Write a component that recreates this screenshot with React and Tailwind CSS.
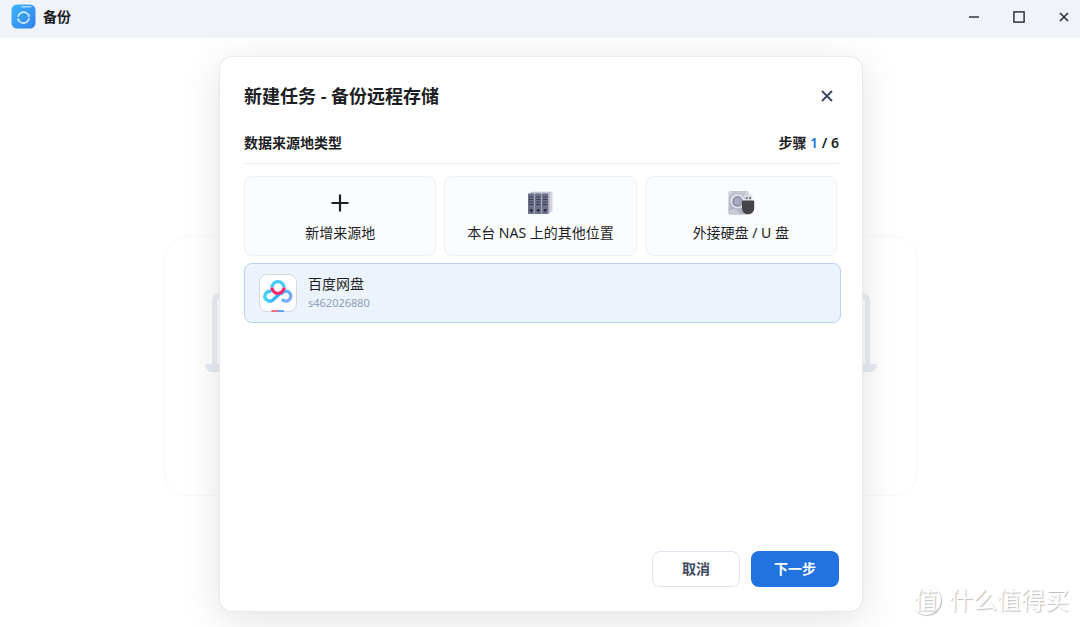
import React, { useState } from "react";

const SOURCE_TYPES = [
  { id: "new", label: "新增来源地", Icon: PlusIcon },
  { id: "nas", label: "本台 NAS 上的其他位置", Icon: ServerIcon },
  { id: "usb", label: "外接硬盘 / U 盘", Icon: DiskIcon },
];

const ACCOUNTS = [{ id: "baidu", name: "百度网盘", user: "s462026880" }];

function AppLogo() {
  return (
    <svg width="25" height="25" viewBox="0 0 25 25" aria-hidden="true">
      <defs>
        <linearGradient id="logoBg" x1="0" y1="0" x2="1" y2="1">
          <stop offset="0" stopColor="#3cb5fb" />
          <stop offset="1" stopColor="#3180ec" />
        </linearGradient>
      </defs>
      <rect x="0.5" y="0.5" width="24" height="24" rx="5.5" fill="url(#logoBg)" />
      <rect x="10" y="2" width="10.5" height="1.6" rx="0.8" fill="#a6d8fc" />
      <g fill="none" stroke="#d5ecfd" strokeWidth="1.6" strokeLinecap="round">
        <path d="M7.3 12.2A5.6 5.6 0 0 1 17.2 10.4" />
        <path d="M17.9 14.6A5.6 5.6 0 0 1 8 17" />
      </g>
      <path d="M16 12.6l3.2.2-.9-3.1zM9 15.2l-3.1-.6.8 3.2z" fill="#d5ecfd" />
    </svg>
  );
}

function PlusIcon() {
  return (
    <svg width="28" height="28" viewBox="0 0 28 28" aria-hidden="true">
      <path d="M14 5.5v17M5.5 14h17" stroke="#1c1e24" strokeWidth="2.2" fill="none" />
    </svg>
  );
}

function ServerIcon() {
  return (
    <svg width="28" height="28" viewBox="0 0 28 28" aria-hidden="true">
      <path d="M2 5.2L5.5 2.8H26.5L23 5.2z" fill="#c3c4d1" />
      <path d="M22.5 5.2L26.5 2.8V22L22.5 25z" fill="#d2d3de" />
      {[2, 9, 16].map((x) => (
        <g key={x}>
          <path d={`M${x + 6} 5.2l2-1.6v20l-2 1.4z`} fill="#c0c1ce" />
          <rect x={x} y="4.5" width="6.3" height="20.5" rx="0.5" fill="#6d7089" />
          <path
            d={`M${x + 1} 8h4.3M${x + 1} 10.5h4.3M${x + 1} 13h4.3M${x + 1} 15.5h4.3`}
            stroke="#3c3f55"
            strokeWidth="1.1"
          />
          <circle cx={x + 3.2} cy="21.3" r="1.4" fill="#24273a" />
        </g>
      ))}
    </svg>
  );
}

function DiskIcon() {
  return (
    <svg width="28" height="28" viewBox="0 0 28 28" aria-hidden="true">
      <defs>
        <linearGradient id="diskBody" x1="0" y1="0" x2="0" y2="1">
          <stop offset="0" stopColor="#c5c7d2" />
          <stop offset="1" stopColor="#adb0be" />
        </linearGradient>
      </defs>
      <rect x="1.5" y="2" width="20" height="23.5" rx="2" fill="url(#diskBody)" />
      <path d="M3.5 20.5c4-1 8 1 10 5h-10z" fill="#c9cbd5" />
      <circle cx="10.6" cy="12.4" r="7" fill="#e6e7ed" />
      <circle cx="10.6" cy="12.4" r="4.6" fill="#a7aabc" stroke="#85889b" strokeWidth="1.4" />
      <g fill="#f3f4f7">
        <circle cx="3.6" cy="4.1" r="0.8" />
        <circle cx="19.4" cy="4.1" r="0.8" />
        <circle cx="3.6" cy="23" r="0.8" />
      </g>
      <rect x="17.3" y="5.8" width="8" height="7" rx="0.8" fill="#dcdee6" />
      <path d="M18.9 8h1.7v2h-1.7zM22.1 8h1.7v2h-1.7z" fill="#666a7c" />
      <path d="M15 12.6q0-1 1-1h10.2q1 0 1 1v6.6c0 3.2-2.5 5.8-6.1 6.1-3.6-.3-6.1-2.9-6.1-6.1z" fill="#454448" />
    </svg>
  );
}

function BaiduIcon() {
  return (
    <svg width="38" height="38" viewBox="0 0 38 38" aria-hidden="true">
      <defs>
        <linearGradient id="panLeft" x1="0" y1="0" x2="1" y2="0">
          <stop offset="0" stopColor="#45d2fa" />
          <stop offset="1" stopColor="#2aa3f5" />
        </linearGradient>
        <linearGradient id="panRight" x1="0" y1="0" x2="1" y2="1">
          <stop offset="0" stopColor="#3fbdf8" />
          <stop offset="1" stopColor="#8ba4fa" />
        </linearGradient>
      </defs>
      <rect x="0.5" y="0.5" width="37" height="37" rx="7.5" fill="#fff" stroke="#d6d9df" />
      <g fill="none" strokeWidth="3.4">
        <path d="M12.6 17.6a4.9 4.9 0 1 0 1.6 8.2L22.5 18" stroke="url(#panLeft)" />
        <path d="M22.5 19.6a5 5 0 1 1 1.4 6.6" stroke="url(#panRight)" strokeLinecap="round" />
        <path d="M13 13.6a6 6 0 0 1 12 0" stroke="#45cdf9" />
        <path d="M13 13.4a6 6 0 0 0 12 0" stroke="#f92a6c" />
      </g>
      <path d="M12.5 37h6.5" stroke="#fa3558" strokeWidth="1.4" />
      <path d="M19 37h6" stroke="#2584fa" strokeWidth="1.4" />
    </svg>
  );
}

// Laptop shown on both ends of the empty state
function LaptopIcon() {
  return (
    <svg width="150" height="80" viewBox="0 0 150 80" aria-hidden="true">
      <path d="M9.5 72V8q0-5 5-5h121q5 0 5 5v64" fill="none" stroke="#e9edf4" strokeWidth="5" />
      <path d="M0 71h150v1q-1 7-7 7H7q-6 0-7-7z" fill="#e7ebf3" />
    </svg>
  );
}

function TitleBar() {
  return (
    <header className="flex h-[38px] shrink-0 items-center justify-between bg-[#f0f3f8] pr-2 pl-[11px]">
      <div className="flex items-center gap-[7px] pb-1.5">
        <AppLogo />
        <h1 className="pt-0.5 text-sm font-semibold text-[#1c1e24]">备份</h1>
      </div>
      <div className="flex items-center gap-[29px] pb-1 text-[#24262d]">
        <button type="button" aria-label="最小化" className="flex size-4 items-center justify-center">
          <svg width="16" height="16" viewBox="0 0 16 16" stroke="currentColor" strokeWidth="1.4" fill="none">
            <path d="M3 8h10" />
          </svg>
        </button>
        <button type="button" aria-label="最大化" className="flex size-4 items-center justify-center">
          <svg width="16" height="16" viewBox="0 0 16 16" stroke="currentColor" strokeWidth="1.4" fill="none">
            <rect x="2.9" y="2.9" width="10.2" height="10.2" />
          </svg>
        </button>
        <button type="button" aria-label="关闭" className="flex size-4 items-center justify-center">
          <svg width="16" height="16" viewBox="0 0 16 16" stroke="currentColor" strokeWidth="1.5" fill="none">
            <path d="M4 4l8 8M12 4l-8 8" />
          </svg>
        </button>
      </div>
    </header>
  );
}

function Watermark() {
  return (
    <div className="pointer-events-none absolute right-[11px] bottom-[11px] flex items-center gap-2 text-white [text-shadow:1px_1px_1px_#bcbcbc]">
      <span className="flex size-[30px] items-center justify-center rounded-full text-2xl leading-7 shadow-[1px_1px_1px_#bcbcbc]">
        值
      </span>
      <span className="text-2xl leading-8">什么值得买</span>
    </div>
  );
}

const App = () => {
  const [selected, setSelected] = useState("baidu");

  return (
    <div className="flex min-h-screen flex-col bg-white font-['Noto_Sans','Noto_Sans_CJK_SC',sans-serif] text-[#1c1e24]">
      <TitleBar />
      <main className="relative flex flex-1 flex-col items-center pl-0.5">
        <div className="mt-[198px] flex h-[260px] w-[754px] max-w-full items-start justify-between rounded-3xl border border-[#f9f9fa] px-10 pt-14">
          <LaptopIcon />
          <LaptopIcon />
        </div>

        <div className="absolute inset-0 flex items-start justify-center pt-[19px] pl-0.5">
          <section
            role="dialog"
            aria-labelledby="dialog-title"
            className="flex min-h-[554px] w-[642px] flex-col rounded-xl bg-white pt-[23px] pr-[23px] pb-6 pl-6 shadow-[0_0_0_1px_#e8e9eb,0_8px_40px_rgba(0,0,0,0.12)]"
          >
            <div className="flex h-8 items-center justify-between">
              <h2 id="dialog-title" className="text-lg font-semibold">
                新建任务 - 备份远程存储
              </h2>
              <button type="button" aria-label="关闭" className="flex size-6 items-center justify-center text-[#3f4a5f]">
                <svg width="16" height="16" viewBox="0 0 16 16" stroke="currentColor" strokeWidth="2" fill="none">
                  <path d="M3 3l10 10M13 3L3 13" />
                </svg>
              </button>
            </div>

            <div className="mt-4 flex h-9 items-start justify-between border-b border-[#eceef5] pt-[5px] text-sm font-semibold">
              <h3>数据来源地类型</h3>
              <p>
                步骤 <span className="text-[#2272e0]">1</span> / 6
              </p>
            </div>

            <div className="mt-3 mr-0.5 grid grid-cols-3 gap-2">
              {SOURCE_TYPES.map(({ id, label, Icon }) => (
                <button
                  key={id}
                  type="button"
                  onClick={() => setSelected(id)}
                  className="flex h-20 flex-col items-center gap-1.5 rounded-lg border border-[#eef0f5] bg-[#fbfcfe] pt-3 text-sm"
                >
                  <Icon />
                  {label}
                </button>
              ))}
            </div>

            <div className="mt-[7px] -mr-0.5">
              {ACCOUNTS.map((account) => (
                <button
                  key={account.id}
                  type="button"
                  onClick={() => setSelected(account.id)}
                  className={`flex h-[60px] w-full items-center gap-[11px] rounded-lg border px-3.5 text-left ${
                    selected === account.id ? "border-[#b9d3f5] bg-[#ecf3fc]" : "border-[#eef0f5] bg-[#fbfcfe]"
                  }`}
                >
                  <BaiduIcon />
                  <span className="flex flex-col">
                    <span className="text-sm">{account.name}</span>
                    <span className="text-[11px] leading-[18px] text-[#8f9db5]">{account.user}</span>
                  </span>
                </button>
              ))}
            </div>

            <div className="mt-auto flex justify-end gap-[11px] text-sm font-semibold">
              <button
                type="button"
                className="h-9 w-[88px] rounded-lg border border-[#dbe3ee] bg-white text-[#3f4a5f]"
              >
                取消
              </button>
              <button type="button" className="h-9 w-[88px] rounded-lg bg-[#2272e0] text-white">
                下一步
              </button>
            </div>
          </section>
        </div>

        <Watermark />
      </main>
    </div>
  );
};

export default App;
